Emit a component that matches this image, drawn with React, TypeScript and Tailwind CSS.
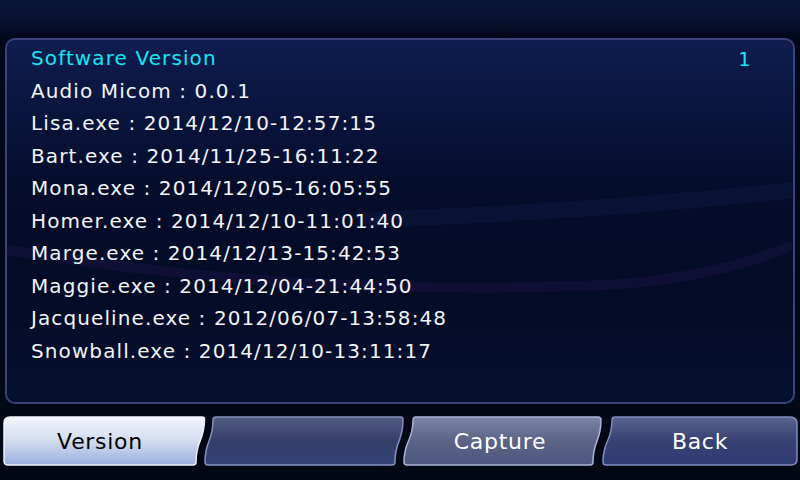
import type { ReactNode } from 'react';

const lines = [
  'Audio Micom : 0.0.1',
  'Lisa.exe : 2014/12/10-12:57:15',
  'Bart.exe : 2014/11/25-16:11:22',
  'Mona.exe : 2014/12/05-16:05:55',
  'Homer.exe : 2014/12/10-11:01:40',
  'Marge.exe : 2014/12/13-15:42:53',
  'Maggie.exe : 2014/12/04-21:44:50',
  'Jacqueline.exe : 2012/06/07-13:58:48',
  'Snowball.exe : 2014/12/10-13:11:17',
];

type Tab = {
  label: string;
  path: string;
  top: string;
  mid: string;
  bottom: string;
  edge: string;
  text: string;
};

const tabs: Tab[] = [
  {
    label: 'Version',
    path: 'M4,7 Q4,1 10,1 H202 Q205,1 204.5,4 C204,26 196,24 196,46 Q196,49 193,49 H8 Q4,49 4,45 Z',
    top: '#f3f5fb',
    mid: '#d3dcef',
    bottom: '#98afe0',
    edge: '#eef2fb',
    text: 'text-black',
  },
  {
    label: '',
    path: 'M16,1 H201 Q203,1 203,4 C203,26 195,24 195,46 Q195,49 192,49 H8 Q5,49 5,46 C5,24 13,26 13,4 Q13,1 16,1 Z',
    top: '#535c82',
    mid: '#353e68',
    bottom: '#34427a',
    edge: '#8391c0',
    text: 'text-white',
  },
  {
    label: 'Capture',
    path: 'M16,1 H198 Q201,1 201,4 C201,26 193,24 193,46 Q193,49 190,49 H7 Q4,49 4,46 C4,24 13,26 13,4 Q13,1 16,1 Z',
    top: '#7c85a6',
    mid: '#5b6386',
    bottom: '#4d5780',
    edge: '#a9b4d8',
    text: 'text-white',
  },
  {
    label: 'Back',
    path: 'M15,1 H190 Q197,1 197,8 V43 Q197,49 191,49 H6 Q3,49 3,46 C3,24 12,26 12,4 Q12,1 15,1 Z',
    top: '#5a6490',
    mid: '#374172',
    bottom: '#2f3b74',
    edge: '#7f8cc0',
    text: 'text-white',
  },
];

const TabButton = ({ tab, idx }: { tab: Tab; idx: number }) => {
  const id = `tabgrad${idx}`;
  return (
    <div className="relative w-[200px] h-[50px] flex items-center justify-center">
      <svg className="absolute inset-0 overflow-visible" width="200" height="50" viewBox="0 0 200 50">
        <defs>
          <linearGradient id={id} x1="0" y1="0" x2="0" y2="1">
            <stop offset="0" stopColor={tab.top} />
            <stop offset="0.5" stopColor={tab.mid} />
            <stop offset="1" stopColor={tab.bottom} />
          </linearGradient>
        </defs>
        <path d={tab.path} fill={`url(#${id})`} stroke={tab.edge} strokeWidth="1.5" />
      </svg>
      <span className={`relative text-[22px] tracking-[0.7px] ${tab.text}`}>{tab.label}</span>
    </div>
  );
};

const Row = ({ children, className }: { children: ReactNode; className?: string }) => (
  <div className={`h-[32.5px] leading-[32.5px] whitespace-nowrap ${className ?? ''}`}>{children}</div>
);

export default function App() {
  return (
    <div
      className="relative w-[800px] h-[480px] overflow-hidden bg-[linear-gradient(180deg,#0b1738_0%,#081232_4%,#03081a_8%,#020816_85%,#020813_100%)] font-['DejaVu_Sans',sans-serif]"
    >
      <div className="pt-[38px] px-[5px]">
        <div className="relative h-[366px] rounded-[10px] border-2 border-[#38437c] bg-[linear-gradient(180deg,#0f1d50_0%,#0b1844_12%,#050d2c_40%,#040b26_70%,#061030_100%)] overflow-hidden">
          <svg className="absolute inset-0" width="786" height="362" viewBox="0 0 786 362">
            <path d="M0,210 C150,235 350,255 600,245 C680,240 740,225 786,205" fill="none" stroke="#2a1a5a" strokeWidth="10" opacity="0.3" />
            <path d="M350,180 C500,175 650,165 786,150" fill="none" stroke="#10204a" strokeWidth="16" opacity="0.35" />
          </svg>
          <div className="relative pl-[24px] pt-[2px] text-[20px] tracking-[1.1px] text-[#f2f4f8]">
            <Row className="text-[#18e6f2]">Software Version</Row>
            {lines.map((l) => (
              <Row key={l}>{l}</Row>
            ))}
          </div>
          <div className="absolute right-[43px] top-[3px] leading-[32px] text-[20px] text-[#18e6f2] font-['DejaVu_Sans_Mono',monospace]">
            1
          </div>
        </div>
      </div>
      <div className="flex mt-[12px]">
        {tabs.map((t, i) => (
          <TabButton key={i} tab={t} idx={i} />
        ))}
      </div>
    </div>
  );
}
